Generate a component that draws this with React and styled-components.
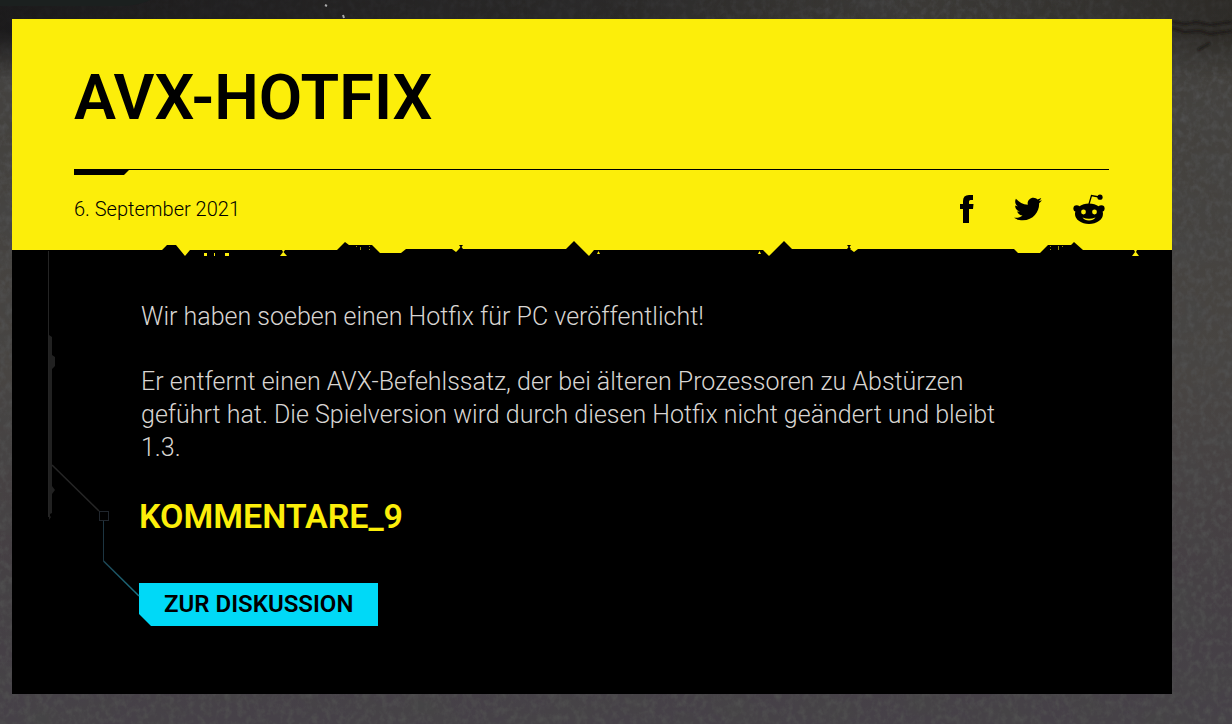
import React from "react";
import styled, { createGlobalStyle } from "styled-components";
import { FaTwitter } from "react-icons/fa";

const GlobalStyle = createGlobalStyle`
  * {
    box-sizing: border-box;
  }
  body {
    margin: 0;
    background: #3e393d;
    font-family: Roboto, "Liberation Sans", sans-serif;
  }
`;

const Page = styled.div`
  position: relative;
  min-height: 100vh;
  padding: 19px 60px 30px 12px;
  overflow: hidden;
`;

const Stone = styled.svg`
  position: absolute;
  inset: 0;
  width: 100%;
  height: 100%;
`;

const Card = styled.article`
  position: relative;
  background: #000;
`;

const Header = styled.header`
  padding: 43px 63px 15px 62px;
  background: #fcee0a;
  color: #000;
`;

const Title = styled.h1`
  margin: 0;
  font-size: 63px;
  line-height: 72px;
  font-weight: 600;
`;

const Rule = styled.div`
  height: 6px;
  margin-top: 35px;
  border-top: 1px solid #000;

  &::before {
    content: "";
    display: block;
    width: 55px;
    height: 5px;
    background: #000;
    clip-path: polygon(0 0, 100% 0, 50px 100%, 0 100%);
  }
`;

const Meta = styled.div`
  display: flex;
  align-items: center;
  justify-content: space-between;
  height: 34px;
  margin-top: 17px;
`;

const PostDate = styled.time`
  font-size: 20px;
  line-height: 24px;
  font-weight: 300;
`;

const Social = styled.nav`
  display: flex;
  align-items: center;
  gap: 25px;
  padding-right: 2px;
`;

const SocialLink = styled.a`
  display: flex;
  justify-content: center;
  width: 36px;
  color: #000;
`;

const Edge = styled.svg`
  display: block;
  width: 100%;
  height: 16px;
  background: #fcee0a;
`;

const Body = styled.div`
  padding: 43px 160px 68px 127px;
`;

const Paragraph = styled.p`
  margin: 0 0 32px 2px;
  color: #d8d5d2;
  font-size: 25px;
  line-height: 33px;
  font-weight: 300;
`;

const Comments = styled.h2`
  margin: 0 0 47px;
  color: #fcee0a;
  font-size: 34px;
  line-height: 40px;
  font-weight: 600;
`;

const Discuss = styled.a`
  display: inline-block;
  padding: 0 25px;
  background: #00d9f7;
  color: #000;
  font-size: 24px;
  line-height: 43px;
  font-weight: 600;
  text-decoration: none;
  vertical-align: top;
  clip-path: polygon(0 0, 100% 0, 100% 100%, 12px 100%, 0 31px);
`;

const Circuit = styled.svg`
  position: absolute;
  left: 30px;
  top: 232px;
  pointer-events: none;
`;

const StoneTexture = () => (
  <Stone aria-hidden="true">
    <defs>
      <filter id="grain" x="0" y="0" width="100%" height="100%">
        <feTurbulence type="fractalNoise" baseFrequency="0.16 0.13" numOctaves="4" seed="8" />
        <feColorMatrix values="0 0 0 0 0.08  0 0 0 0 0.08  0 0 0 0 0.08  2 0 0 0 -0.85" />
      </filter>
      <filter id="blotch" x="0" y="0" width="100%" height="100%">
        <feTurbulence type="fractalNoise" baseFrequency="0.02 0.03" numOctaves="4" seed="3" />
        <feColorMatrix values="0 0 0 0 0.06  0 0 0 0 0.06  0 0 0 0 0.06  1.6 0 0 0 -0.6" />
      </filter>
      <linearGradient id="stone" x1="0" y1="0" x2="0" y2="1">
        <stop offset="0" stopColor="#413f3b" />
        <stop offset="0.5" stopColor="#484542" />
        <stop offset="0.8" stopColor="#453f44" />
        <stop offset="1" stopColor="#464148" />
      </linearGradient>
      <linearGradient id="shade" x1="0" y1="0" x2="1" y2="0">
        <stop offset="0" stopColor="#121113" stopOpacity="0.8" />
        <stop offset="0.5" stopColor="#141315" stopOpacity="0.5" />
        <stop offset="0.75" stopColor="#1b1919" stopOpacity="0.15" />
        <stop offset="1" stopColor="#17140f" stopOpacity="0.5" />
      </linearGradient>
      <linearGradient id="fade" x1="0" y1="0" x2="0" y2="1">
        <stop offset="0.4" stopColor="#fff" />
        <stop offset="1" stopColor="#000" />
      </linearGradient>
      <mask id="top">
        <rect width="100%" height="80" fill="url(#fade)" />
      </mask>
      <filter id="soft">
        <feGaussianBlur stdDeviation="0.8" />
      </filter>
    </defs>
    <rect width="100%" height="100%" fill="url(#stone)" />
    <rect width="100%" height="100%" filter="url(#blotch)" />
    <rect width="100%" height="100%" filter="url(#grain)" />
    <rect width="100%" height="80" fill="url(#shade)" mask="url(#top)" />
    <path d="M0 0H150Q140 5 125 6H0Z" fill="#1b201f" />
    <path
      d="M1172 22l14 2 10-2 14 3 22-3M1172 28l12 4 16-1 10 3 22-3M1198 50l12-7"
      fill="none"
      stroke="#1b1812"
      strokeWidth="2"
      filter="url(#soft)"
    />
    <path d="M325 5l2 1M343 15l1 3" stroke="#aaa" strokeWidth="2" />
  </Stone>
);

const TornEdge = () => (
  <Edge viewBox="0 0 1160 16" preserveAspectRatio="none" aria-hidden="true">
    <path d="M0 9H150L155 4H164L173 15L178 9H325L333 1L337 4H360L368 12H389L394 8H440L444 11L447 8H554L562 0L577 15L582 9H751L757 15L772 0L780 8H838L842 11L846 8H1002L1006 12H1028L1036 4H1059L1062 1L1071 9H1160V16H0Z" />
    <path d="M447 4H451L449.500 6L451 8H447L448.500 6ZM835 4H839L837.500 6L839 8H835L836.500 6Z" />
    <g fill="#fcee0a">
      <path d="M192 12h3v3h-3zM202 12h1v3h-1zM213 12h4v3h-4zM270 9h3l-1.500 2L275 15h-7l3-4z" />
      <path d="M585 13l1.500-3l1.500 3zM746 13l1.500-3l1.500 3zM1122 9h3l-1 2L1127 15h-7l3-4z" />
      <path
        d="M344 5h1v1h-1zM348 6h1v3h-1zM357 5h1v1h-1zM357 8h1v1h-1zM1038 5h1v1h-1zM1038 8h1v1h-1zM1046 5h1v4h-1zM1050 5h1v1h-1z"
        opacity="0.6"
      />
    </g>
  </Edge>
);

const FacebookIcon = () => (
  <svg width="14" height="28" viewBox="0 0 14 28" fill="currentColor" aria-hidden="true">
    <path d="M3 28V14H0V9H3V6Q3 0 9 0H13V5H10.500Q9 5 9 6.500V9H13.500L13 14H9V28Z" />
  </svg>
);

const RedditIcon = () => (
  <svg width="32" height="32" viewBox="0 0 32 32" fill="currentColor" aria-hidden="true">
    <path d="M16 11L18.500 2.500L26 4" fill="none" stroke="currentColor" strokeWidth="1.300" />
    <circle cx="27" cy="4.200" r="2.600" />
    <circle cx="3.700" cy="15.500" r="3.300" />
    <circle cx="28.300" cy="15.500" r="3.300" />
    <ellipse cx="16" cy="20.700" rx="14" ry="10.300" />
    <g fill="#fcee0a">
      <circle cx="10.500" cy="19" r="2.400" />
      <circle cx="21.500" cy="19" r="2.400" />
      <path d="M9.500 24.500Q16 27 22.500 24.500Q20.500 27.500 16 27.500Q11.500 27.500 9.500 24.500Z" />
    </g>
  </svg>
);

const CircuitLines = () => (
  <Circuit width="100" height="350" fill="none" aria-hidden="true">
    <defs>
      <linearGradient id="trace" gradientUnits="userSpaceOnUse" x1="62" y1="310" x2="97" y2="345">
        <stop offset="0" stopColor="#1d4554" />
        <stop offset="1" stopColor="#1b7587" />
      </linearGradient>
    </defs>
    <path d="M6.500 0V266" stroke="#242424" />
    <path d="M7 84l3 2v18l3 2v9l-3 3v43v74l3 4l-3 4v19l-2 1v2l1 1l-2 3z" fill="#212121" />
    <path d="M10 214L57 260" stroke="#262626" strokeWidth="1.500" />
    <rect x="57.500" y="260.500" width="9" height="9" stroke="#20262d" />
    <path d="M61.500 270V310" stroke="#1d3541" />
    <path d="M61.500 310L97 345" stroke="url(#trace)" strokeWidth="1.500" />
  </Circuit>
);

const App = () => {
  return (
    <>
      <GlobalStyle />
      <Page>
        <StoneTexture />
        <Card>
          <Header>
            <Title>AVX-HOTFIX</Title>
            <Rule />
            <Meta>
              <PostDate dateTime="2021-09-06">6. September 2021</PostDate>
              <Social>
                <SocialLink href="#facebook" aria-label="Facebook">
                  <FacebookIcon />
                </SocialLink>
                <SocialLink href="#twitter" aria-label="Twitter">
                  <FaTwitter size={28} />
                </SocialLink>
                <SocialLink href="#reddit" aria-label="Reddit">
                  <RedditIcon />
                </SocialLink>
              </Social>
            </Meta>
          </Header>
          <TornEdge />
          <Body>
            <Paragraph>Wir haben soeben einen Hotfix für PC veröffentlicht!</Paragraph>
            <Paragraph>
              Er entfernt einen AVX-Befehlssatz, der bei älteren Prozessoren zu Abstürzen
              geführt hat. Die Spielversion wird durch diesen Hotfix nicht geändert und bleibt
              1.3.
            </Paragraph>
            <Comments>KOMMENTARE_9</Comments>
            <Discuss href="#diskussion">ZUR DISKUSSION</Discuss>
          </Body>
          <CircuitLines />
        </Card>
      </Page>
    </>
  );
};

export default App;
